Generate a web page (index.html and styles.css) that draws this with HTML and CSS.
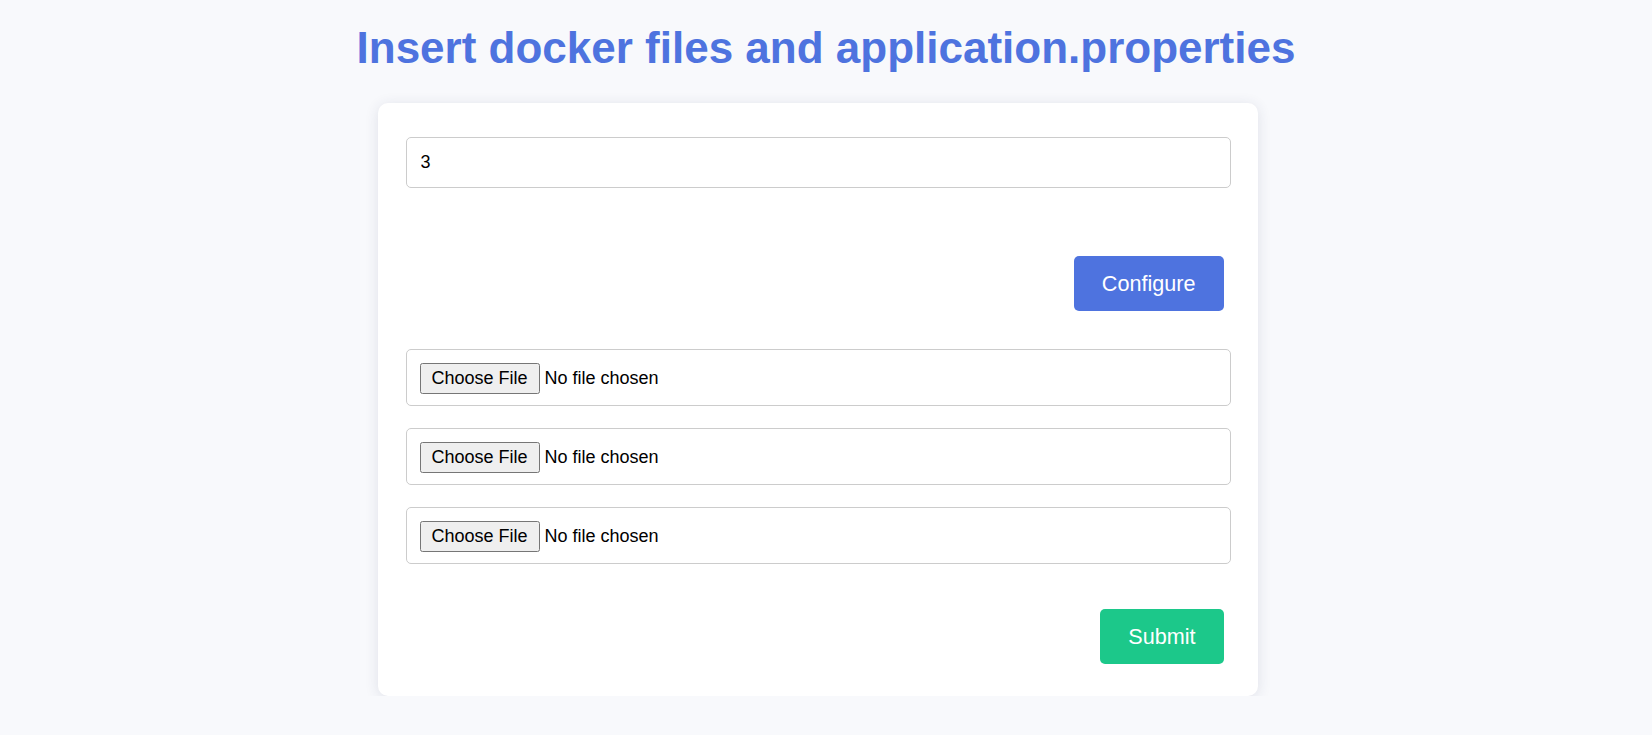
FILE: index.html
```html
<!DOCTYPE html>
<html lang="en">
<head>
<meta charset="utf-8">
<title>Insert docker files</title>
<link rel="stylesheet" href="styles.css">
</head>
<body>
  <h1 class="title">Insert docker files and application.properties</h1>
  <main class="main">
    <div class="card">
      <form class="form">
        <input class="field field-text" type="text" value="3">
        <div class="actions actions-configure">
          <button class="btn btn-primary" type="button">Configure</button>
        </div>
        <div class="files">
          <input class="field field-file" type="file">
          <input class="field field-file" type="file">
          <input class="field field-file" type="file">
        </div>
        <div class="actions actions-submit">
          <button class="btn btn-success" type="submit">Submit</button>
        </div>
      </form>
    </div>
  </main>
</body>
</html>
```
FILE: styles.css
```css
html, body {
  margin: 0;
  padding: 0;
}

body {
  background: #f8f9fc;
  font-family: "Liberation Sans", Arial, sans-serif;
  color: #000;
}

.title {
  margin: 23px 0 30px;
  text-align: center;
  font-size: 44px;
  font-weight: bold;
  line-height: normal;
  color: #4e73df;
}

.main {
  display: flex;
  justify-content: center;
  padding-right: 17px;
}

.card {
  box-sizing: border-box;
  width: 880px;
  padding: 34px 27px 32px 28px;
  background: #fff;
  border-radius: 10px;
  box-shadow: 0 2px 14px rgba(40, 50, 90, 0.12);
}

.form {
  display: flex;
  flex-direction: column;
}

.field {
  box-sizing: border-box;
  width: 100%;
  margin: 0;
  border: 1px solid #cccccc;
  border-radius: 5px;
  background: #fff;
  font-family: "Liberation Sans", Arial, sans-serif;
  font-size: 18px;
  color: #000;
}

.field-text {
  height: 51px;
  padding: 14px;
  line-height: normal;
}

.files {
  display: flex;
  flex-direction: column;
  gap: 22px;
  margin-top: 38px;
}

.field-file {
  height: 57px;
  padding: 13px 13px;
}

.field-file::file-selector-button {
  font-family: "Liberation Sans", Arial, sans-serif;
  font-size: 18px;
  padding: 3px 10px;
  margin-right: 5px;
}

.actions {
  display: flex;
  justify-content: flex-end;
  padding-right: 7px;
}

.actions-configure {
  margin-top: 68px;
}

.actions-submit {
  margin-top: 45px;
}

.btn {
  border: none;
  border-radius: 5px;
  padding: 14.5px 28px;
  font-family: "Liberation Sans", Arial, sans-serif;
  font-size: 21.6px;
  line-height: normal;
  color: #fff;
  cursor: pointer;
}

.btn-primary {
  background: #4e73df;
}

.btn-success {
  background: #1cc88a;
}
```
